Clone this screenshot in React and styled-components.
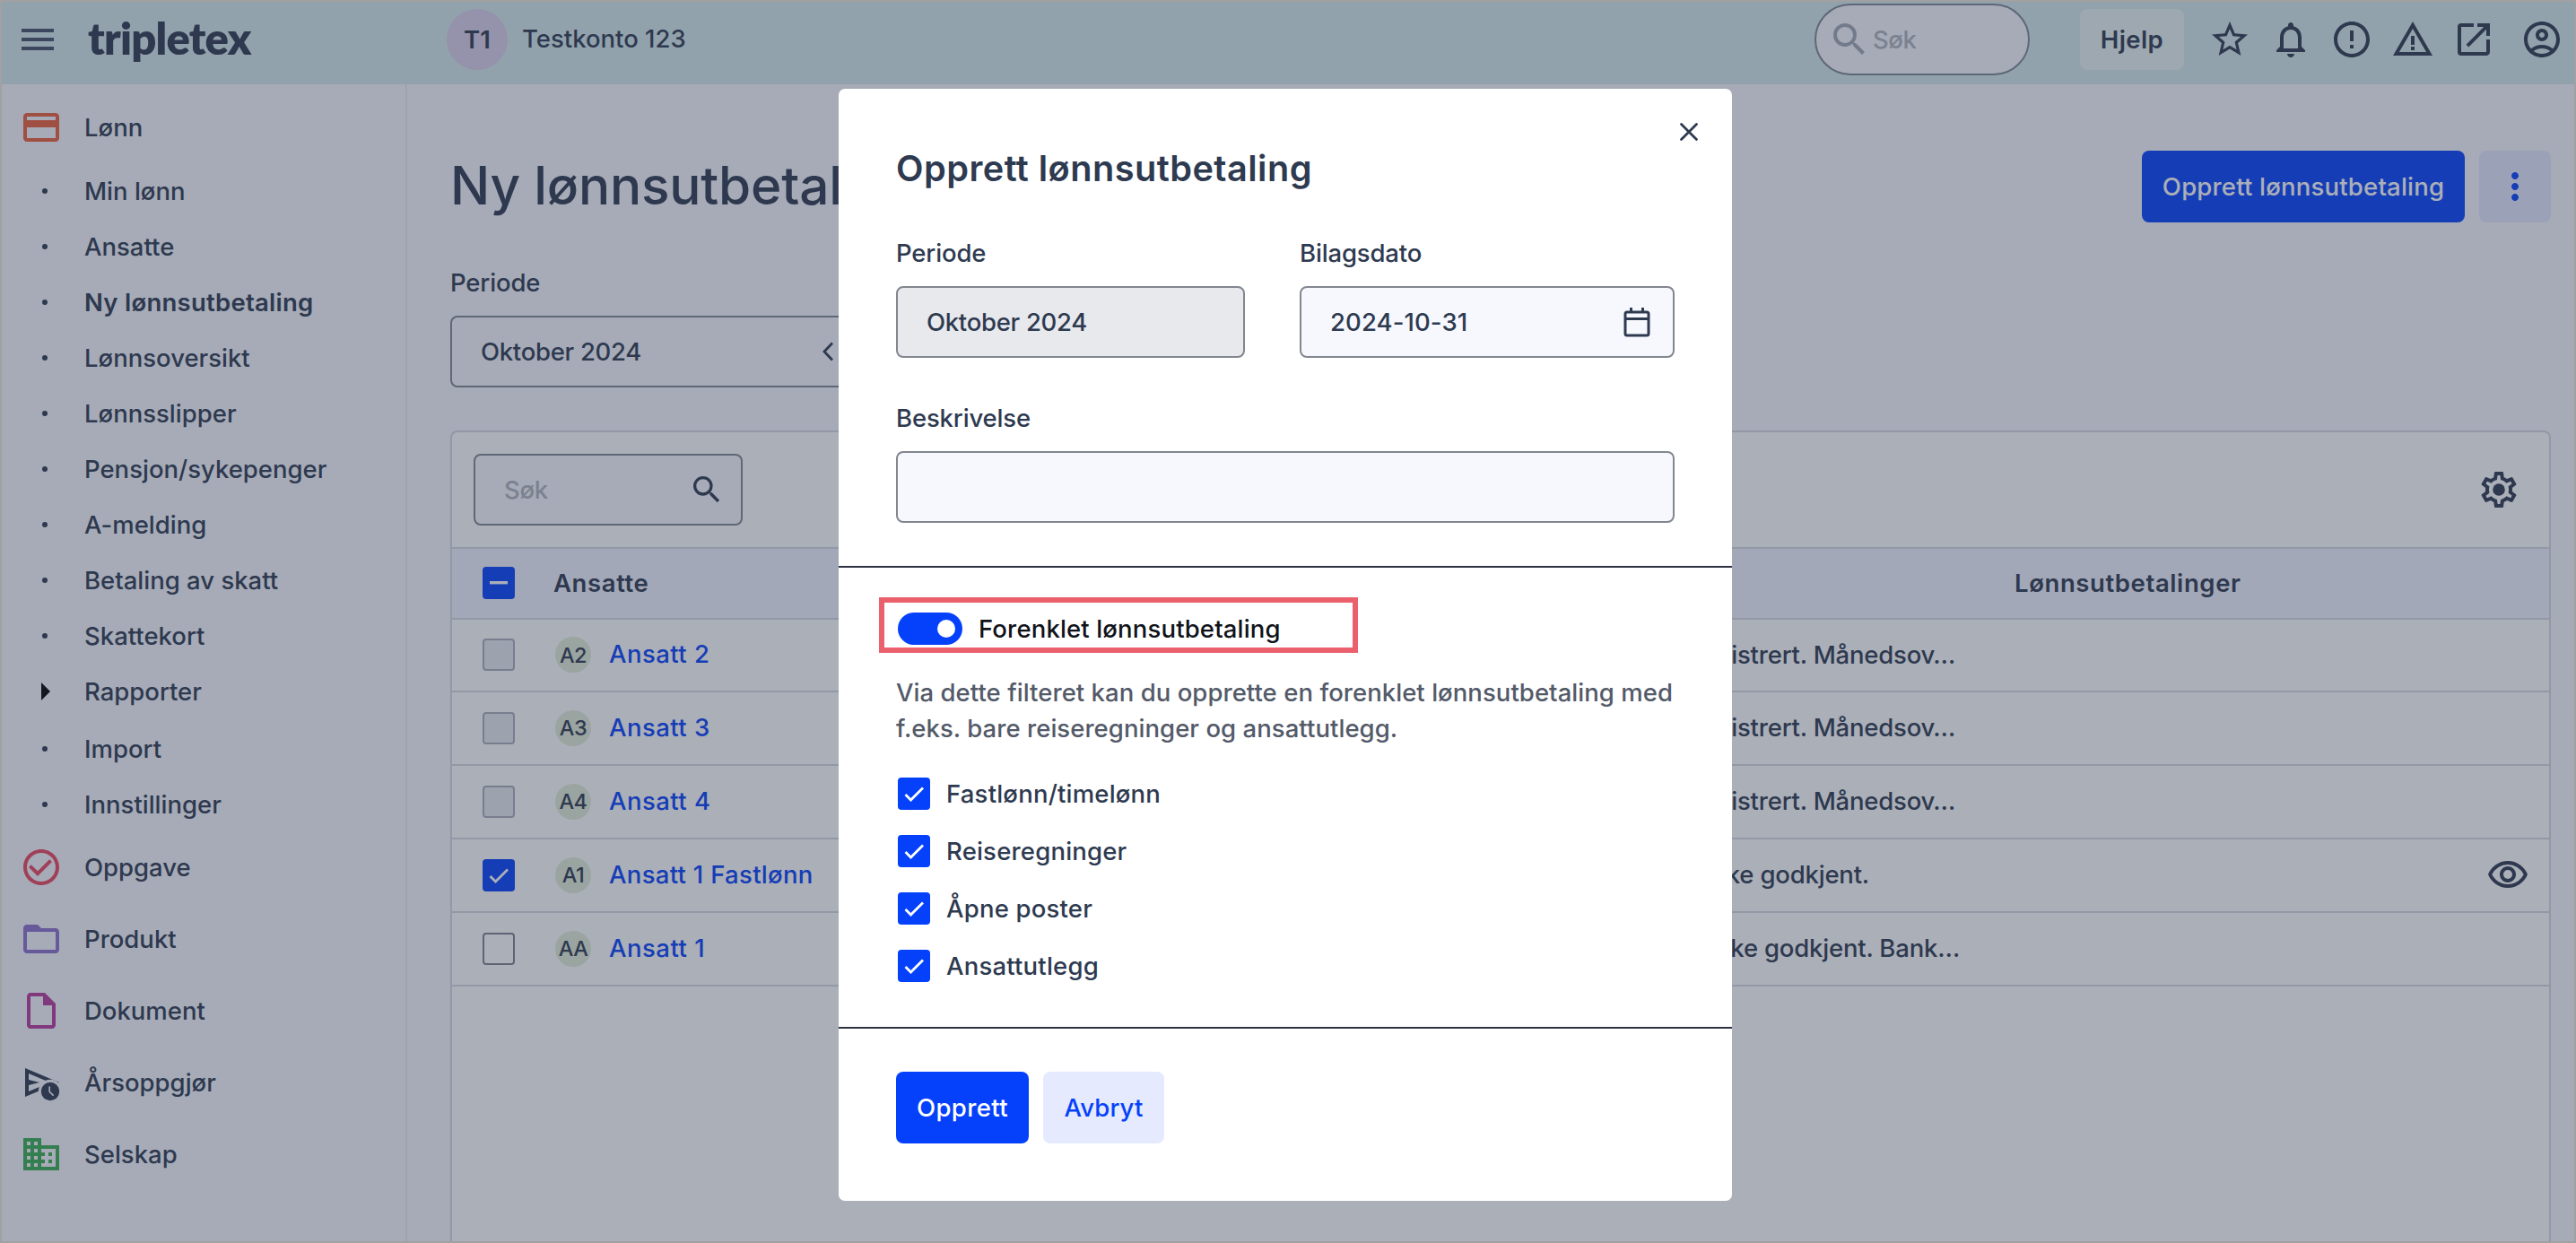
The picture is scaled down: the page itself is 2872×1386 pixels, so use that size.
import React from "react";
import styled, { createGlobalStyle } from "styled-components";
import {
  MdMenu, MdStarBorder, MdNotificationsNone, MdErrorOutline, MdWarningAmber, MdLaunch,
  MdOutlineAccountCircle, MdSearch, MdCreditCard, MdCheckCircleOutline, MdFolderOpen,
  MdOutlineInsertDriveFile, MdBusiness, MdMoreVert, MdOutlineVisibility,
} from "react-icons/md";

const ink = "#2e3a50";
const blue = "#0541fb";
const line = "#d5d8e0";

const Global = createGlobalStyle`
  * { box-sizing: border-box; }
  body { margin: 0; overflow: hidden; }
  body, input, button {
    font-family: Inter, "Liberation Sans", sans-serif;
    font-size: 27.5px;
    font-weight: 450;
    letter-spacing: 0;
    color: ${ink};
  }
`;

const Page = styled.div`
  position: relative;
  height: 1386px;
  overflow: hidden;
  background: #f7f8fd;
  display: flex;
  flex-direction: column;
`;

/* Header */
const Header = styled.header`
  height: 94px;
  flex: none;
  background: #d5e9eb;
  display: flex;
  align-items: flex-start;
  padding: 0 4px 0 18px;
`;
const HeaderGroup = styled.div`
  display: flex;
  align-items: center;
  height: 88px;
  width: ${(p) => (p.$width ? `${p.$width}px` : "auto")};
  margin-left: ${(p) => (p.$push ? "auto" : 0)};
`;
const MenuIcon = styled(MdMenu)`
  width: 48px;
  height: 48px;
  color: #46506a;
`;
const Logo = styled.span`
  font-family: Lato, sans-serif;
  font-weight: 800;
  font-size: 49px;
  letter-spacing: -0.8px;
  line-height: 60px;
  margin: -5px 0 0 32px;
`;
const CompanyAvatar = styled.span`
  width: 68px;
  height: 68px;
  border-radius: 50%;
  background: #dacfe9;
  display: grid;
  place-items: center;
  font-weight: 600;
  padding-bottom: 1px;
`;
const CompanyName = styled.span`
  margin: 0 0 2px 16px;
`;
const GlobalSearch = styled.label`
  width: 240px;
  height: 80px;
  border: 2px solid #7e8794;
  border-radius: 40px;
  background: #f7f8fd;
  display: flex;
  align-items: center;
  padding-left: 13px;
  color: #b0b3bd;
  gap: 2px;
  letter-spacing: -0.4px;
  svg { width: 48px; height: 48px; color: #a2a8b4; }
`;
const HelpButton = styled.button`
  width: 116px;
  height: 68px;
  margin: 0 17px 0 56px;
  border: 0;
  border-radius: 8px;
  background: rgba(255, 255, 255, 0.45);
  font-weight: 600;
  letter-spacing: 0.4px;
  padding: 0 0 1px;
`;
const IconSlot = styled.span`
  width: 68px;
  height: 68px;
  margin-left: ${(p) => p.$before || 0}px;
  display: grid;
  place-items: center;
  svg { width: 48px; height: 48px; }
`;

/* Sidebar */
const Body = styled.div`
  flex: 1;
  display: flex;
  min-height: 0;
`;
const Sidebar = styled.nav`
  width: 454px;
  flex: none;
  border-right: 2px solid #e9ebf1;
  padding-top: 7px;
`;
const NavMain = styled.div`
  height: ${(p) => (p.$open ? 81 : 80)}px;
  display: flex;
  align-items: center;
  gap: 24px;
  padding: 0 0 ${(p) => (p.$open ? 0 : 3)}px 22px;
  svg { width: 48px; height: 48px; color: ${(p) => p.$color}; }
`;
const NavSub = styled.div`
  height: ${(p) => (p.$expandable ? 64 : 62)}px;
  padding: 0 0 ${(p) => (p.$expandable ? 2 : 0)}px 22px;
  display: flex;
  align-items: center;
  gap: 24px;
  font-weight: ${(p) => (p.$active ? 600 : 450)};
  letter-spacing: ${(p) => (p.$active ? 0.25 : 0)}px;
`;
const Marker = styled.span`
  width: 48px;
  display: flex;
  justify-content: center;
  padding-left: ${(p) => (p.$arrow ? 10 : 8)}px;
  &::before {
    content: "";
    width: ${(p) => (p.$arrow ? 0 : 6)}px;
    height: ${(p) => (p.$arrow ? 0 : 6)}px;
    ${(p) => p.$arrow
      ? "border-left: 10px solid #000; border-top: 10px solid transparent; border-bottom: 10px solid transparent;"
      : `border-radius: 50%; background: ${ink};`}
  }
`;

/* Main */
const Main = styled.main`
  flex: 1;
  display: flex;
  flex-direction: column;
  padding: 74px 28px 0 48px;
  min-width: 0;
`;
const TitleBar = styled.div`
  display: flex;
  align-items: center;
  height: 80px;
  gap: 16px;
`;
const PageTitle = styled.h1`
  margin: 0 auto 2px 0;
  font-weight: 480;
  font-size: 58.5px;
  letter-spacing: -0.2px;
  line-height: 80px;
`;
const Button = styled.button`
  height: 80px;
  width: ${(p) => p.$width}px;
  border: 0;
  padding: 0 0 1px;
  border-radius: 8px;
  background: ${(p) => (p.$soft ? "#e5eaff" : blue)};
  color: ${(p) => (p.$soft ? blue : "#fff")};
  font-weight: ${(p) => p.$weight || 450};
  letter-spacing: ${(p) => p.$spacing || 0.2}px;
  display: grid;
  place-items: center;
  svg { width: 48px; height: 48px; }
`;
const Field = styled.div`
  display: flex;
  flex-direction: column;
  width: ${(p) => (p.$width ? `${p.$width}px` : "auto")};
`;
const Label = styled.label`
  height: 32px;
  line-height: 32px;
  margin-bottom: 21px;
  letter-spacing: -0.15px;
`;
const InputBox = styled.div`
  height: 80px;
  width: ${(p) => (p.$width ? `${p.$width}px` : "auto")};
  border: 2px solid #82868f;
  border-radius: 8px;
  background: ${(p) => (p.$disabled ? "#e8e9ed" : "#f6f8fe")};
  color: ${(p) => (p.$placeholder ? "#b0b3bd" : ink)};
  letter-spacing: ${(p) => p.$spacing || -0.3}px;
  display: flex;
  align-items: center;
  justify-content: space-between;
  padding: 0 ${(p) => p.$right || 24}px 1px 32px;
`;
const PeriodField = styled(Field)`
  margin: 51px 0 48px;
`;
const PeriodSelect = styled(InputBox)`
  justify-content: flex-start;
  gap: 202px;
`;

/* Table */
const Panel = styled.section`
  flex: 1;
  border: 2px solid ${line};
  border-bottom: 0;
  border-radius: 8px 8px 0 0;
  background: #fff;
`;
const Toolbar = styled.div`
  height: 130px;
  border-bottom: 2px solid ${line};
  display: flex;
  align-items: center;
  justify-content: space-between;
  padding: 0 32px 0 24px;
`;
const SearchIcon = styled(MdSearch)`
  width: 40px;
  height: 40px;
  color: ${ink};
`;
const Row = styled.div`
  height: ${(p) => p.$height || 82}px;
  border-bottom: 2px solid ${line};
  background: ${(p) => (p.$head ? "#f1f3ff" : "transparent")};
  font-weight: ${(p) => (p.$head ? 600 : 450)};
  letter-spacing: ${(p) => (p.$head ? 0.6 : -0.2)}px;
  display: grid;
  grid-template-columns: 79px 1155px 508px 1fr;
  align-items: center;
  padding: 0 0 1px 34px;
`;
const Person = styled.div`
  display: flex;
  align-items: center;
  padding-left: 2px;
`;
const HeadCell = styled.div`
  padding: 0 0 1px ${(p) => p.$left}px;
`;
const Avatar = styled.span`
  width: 40px;
  height: 40px;
  border-radius: 50%;
  background: #e3edd8;
  font-size: 23.5px;
  letter-spacing: -0.5px;
  display: grid;
  place-items: center;
  margin-right: 20px;
`;
const PersonLink = styled.a`
  color: ${blue};
  padding-bottom: 2px;
  letter-spacing: ${(p) => p.$spacing}px;
`;
const Status = styled.div`
  width: ${(p) => p.$width}px;
  padding-bottom: 1px;
  text-align: right;
  white-space: nowrap;
`;
const RowAction = styled.div`
  display: flex;
  justify-content: flex-end;
  padding-right: 22px;
  svg { width: 48px; height: 48px; }
`;
const CheckSquare = styled.span`
  width: 36px;
  height: 36px;
  flex: none;
  border-radius: 4px;
  display: grid;
  place-items: center;
  border: ${(p) => (p.$on ? "0" : `2px solid ${p.$disabled ? "#a9adb8" : "#7e8290"}`)};
  background: ${(p) => (p.$on ? blue : p.$disabled ? "#e8e9f0" : "transparent")};
`;

/* Dialog */
const Overlay = styled.div`
  position: absolute;
  inset: 0;
  background: rgba(46, 58, 80, 0.405);
  padding: 99px 0 0 935px;
`;
const Dialog = styled.div`
  width: 996px;
  height: 1240px;
  border-radius: 7px;
  background: #fff;
  display: flex;
  flex-direction: column;
`;
const DialogTop = styled.div`
  height: 534px;
  flex: none;
  border-bottom: 2px solid #2c3240;
  padding: 28px 64px 0;
`;
const CloseRow = styled.div`
  height: 40px;
  display: flex;
  justify-content: flex-end;
  margin-right: -36px;
`;
const DialogTitle = styled.h2`
  margin: -1px 0 0;
  height: 44px;
  line-height: 44px;
  font-size: 39.7px;
  font-weight: 620;
  letter-spacing: 0.45px;
`;
const FieldRow = styled.div`
  display: flex;
  gap: 61px;
  margin: 56px 0 51px;
`;
const DialogMiddle = styled.div`
  height: 514px;
  flex: none;
  border-bottom: 2px solid #2c3240;
  padding: 50px 64px 0;
`;
const ToggleRow = styled.div`
  position: relative;
  height: 36px;
  display: flex;
  align-items: center;
  gap: 18px;
  padding-left: 2px;
  letter-spacing: 0.15px;
  color: #10131a;
`;
const Highlight = styled.div`
  position: absolute;
  left: -19px;
  top: -17px;
  width: 534px;
  height: 62px;
  border: 6px solid #ea606d;
`;
const Toggle = styled.span`
  width: 72px;
  height: 36px;
  border-radius: 18px;
  background: ${blue};
  display: flex;
  align-items: center;
  justify-content: flex-end;
  padding-right: 8px;
  &::after {
    content: "";
    width: 20px;
    height: 20px;
    border-radius: 50%;
    background: #fff;
  }
`;
const Description = styled.p`
  margin: 33px -20px 0 0;
  line-height: 40px;
  letter-spacing: 0.05px;
  color: #535a69;
`;
const Options = styled.div`
  margin-top: 35px;
  display: flex;
  flex-direction: column;
  gap: 28px;
`;
const Option = styled.label`
  display: flex;
  align-items: center;
  height: 36px;
  gap: 18px;
  padding-left: 2px;
  letter-spacing: 0.2px;
`;
const Text = styled.span`
  padding-bottom: 1px;
`;
const Actions = styled.div`
  display: flex;
  gap: 16px;
  padding: 48px 64px 0;
`;
const Edge = styled.div`
  position: absolute;
  inset: 0;
  border: 2px solid #a1a1a1;
  pointer-events: none;
`;

const Check = () => (
  <svg width="24" height="24" viewBox="0 0 24 24" fill="none" stroke="#fff" strokeWidth="2.8">
    <path d="M2.5 13 L8.5 19 L22 5.5" />
  </svg>
);
const Dash = () => (
  <svg width="20" height="4" viewBox="0 0 20 4"><rect width="20" height="3.4" fill="#fff" /></svg>
);
const Calendar = () => (
  <svg width="30" height="34" viewBox="0 0 30 34" fill="none" stroke={ink} strokeWidth="3">
    <rect x="2" y="6" width="26" height="26" rx="2" />
    <path d="M2 13.5H28M8.5 1V6M21.5 1V6" />
  </svg>
);
const Close = () => (
  <svg width="40" height="40" viewBox="0 0 40 40" stroke={ink} strokeWidth="2.8" strokeLinecap="round">
    <path d="M11.5 11.5L28.5 28.5M28.5 11.5L11.5 28.5" />
  </svg>
);
const ChevronLeft = () => (
  <svg width="12" height="22" viewBox="0 0 12 22" fill="none" stroke={ink} strokeWidth="2.8">
    <path d="M11 1.5L2 11L11 20.5" />
  </svg>
);
const ScheduleSend = () => (
  <svg viewBox="0 0 24 24">
    <mask id="cut">
      <rect width="24" height="24" fill="#fff" />
      <circle cx="17" cy="17" r="6.6" fill="#000" />
    </mask>
    <path mask="url(#cut)" fill={ink} d="M3 20V4l19 8-19 8zm2-3l11.85-5L5 7v3.5l6 1.5-6 1.5V17z" />
    <circle cx="17" cy="17" r="5.1" fill={ink} />
    <path d="M16.6 14.2V17.1L18.8 19.3" fill="none" stroke="#f7f8fd" strokeWidth="0.8" />
  </svg>
);
const Gear = () => (
  <svg width="48" height="48" viewBox="0 0 24 24" fill={ink}>
    <path d="M19.43 12.98c.04-.32.07-.64.07-.98 0-.34-.03-.66-.07-.98l2.11-1.65c.19-.15.24-.42.12-.64l-2-3.46c-.09-.16-.26-.25-.44-.25-.06 0-.12.01-.17.03l-2.49 1c-.52-.4-1.08-.73-1.69-.98l-.38-2.65C14.46 2.18 14.25 2 14 2h-4c-.25 0-.46.18-.49.42l-.38 2.65c-.61.25-1.17.59-1.69.98l-2.49-1c-.06-.02-.12-.03-.18-.03-.17 0-.34.09-.43.25l-2 3.46c-.13.22-.07.49.12.64l2.11 1.65c-.04.32-.07.65-.07.98 0 .33.03.66.07.98l-2.11 1.65c-.19.15-.24.42-.12.64l2 3.46c.09.16.26.25.44.25.06 0 .12-.01.17-.03l2.49-1c.52.4 1.08.73 1.69.98l.38 2.65c.03.24.24.42.49.42h4c.25 0 .46-.18.49-.42l.38-2.65c.61-.25 1.17-.59 1.69-.98l2.49 1c.06.02.12.03.18.03.17 0 .34-.09.43-.25l2-3.46c.12-.22.07-.49-.12-.64l-2.11-1.65zm-1.98-1.71c.04.31.05.52.05.73 0 .21-.02.43-.05.73l-.14 1.13.89.7 1.08.84-.7 1.21-1.27-.51-1.04-.42-.9.68c-.43.32-.84.56-1.25.73l-1.06.43-.16 1.13-.2 1.35h-1.4l-.19-1.35-.16-1.13-1.06-.43c-.43-.18-.83-.41-1.23-.71l-.91-.7-1.06.43-1.27.51-.7-1.21 1.08-.84.89-.7-.14-1.13c-.03-.31-.05-.54-.05-.74s.02-.43.05-.73l.14-1.13-.89-.7-1.08-.84.7-1.21 1.27.51 1.04.42.9-.68c.43-.32.84-.56 1.25-.73l1.06-.43.16-1.13.2-1.35h1.39l.19 1.35.16 1.13 1.06.43c.43.18.83.41 1.23.71l.91.7 1.06-.43 1.27-.51.7 1.21-1.07.85-.89.7.14 1.13z" />
    <circle cx="12" cy="12" r="3.4" />
  </svg>
);

const subItems = [
  "Min lønn", "Ansatte", "Ny lønnsutbetaling", "Lønnsoversikt", "Lønnsslipper",
  "Pensjon/sykepenger", "A-melding", "Betaling av skatt", "Skattekort", "Rapporter",
  "Import", "Innstillinger",
];
const mainItems = [
  ["Oppgave", MdCheckCircleOutline, "#eb465f"],
  ["Produkt", MdFolderOpen, "#8c71cd"],
  ["Dokument", MdOutlineInsertDriveFile, "#b9399e"],
  ["Årsoppgjør", ScheduleSend, ink],
  ["Selskap", MdBusiness, "#3aad50"],
];
const people = [
  { code: "A2", name: "Ansatt 2", spacing: 0.45, status: "registrert. Månedsov…", end: 408, disabled: true },
  { code: "A3", name: "Ansatt 3", spacing: 0.45, status: "registrert. Månedsov…", end: 408, disabled: true },
  { code: "A4", name: "Ansatt 4", spacing: 0.45, status: "registrert. Månedsov…", end: 408, disabled: true },
  { code: "A1", name: "Ansatt 1 Fastlønn", spacing: 0.3, status: "Ikke godkjent.", end: 312, on: true },
  { code: "AA", name: "Ansatt 1", spacing: 0.5, status: "Ikke godkjent. Bank…", end: 413 },
];
const options = ["Fastlønn/timelønn", "Reiseregninger", "Åpne poster", "Ansattutlegg"];
const headerIcons = [
  [MdStarBorder], [MdNotificationsNone], [MdErrorOutline], [MdWarningAmber], [MdLaunch],
  [MdOutlineAccountCircle, 8],
];

export default function App() {
  return (
    <Page>
      <Global />
      <Header>
        <HeaderGroup $width={480}>
          <MenuIcon />
          <Logo>tripletex</Logo>
        </HeaderGroup>
        <HeaderGroup>
          <CompanyAvatar>T1</CompanyAvatar>
          <CompanyName>Testkonto 123</CompanyName>
        </HeaderGroup>
        <HeaderGroup $push>
          <GlobalSearch><MdSearch />Søk</GlobalSearch>
          <HelpButton>Hjelp</HelpButton>
          {headerIcons.map(([Icon, before], i) => (
            <IconSlot key={i} $before={before}><Icon /></IconSlot>
          ))}
        </HeaderGroup>
      </Header>
      <Body>
        <Sidebar>
          <NavMain $open $color="#ed5f3c"><MdCreditCard />Lønn</NavMain>
          {subItems.map((t) => (
            <NavSub key={t} $active={t === "Ny lønnsutbetaling"} $expandable={t === "Rapporter"}>
              <Marker $arrow={t === "Rapporter"} />{t}
            </NavSub>
          ))}
          {mainItems.map(([t, Icon, color]) => (
            <NavMain key={t} $color={color}><Icon />{t}</NavMain>
          ))}
        </Sidebar>
        <Main>
          <TitleBar>
            <PageTitle>Ny lønnsutbetaling</PageTitle>
            <Button $width={360}>Opprett lønnsutbetaling</Button>
            <Button $width={80} $soft><MdMoreVert /></Button>
          </TitleBar>
          <PeriodField>
            <Label>Periode</Label>
            <PeriodSelect $width={500}>Oktober 2024<ChevronLeft /></PeriodSelect>
          </PeriodField>
          <Panel>
            <Toolbar>
              <InputBox $width={300} $placeholder $right={18}>Søk<SearchIcon /></InputBox>
              <Gear />
            </Toolbar>
            <Row $head $height={79}>
              <CheckSquare $on><Dash /></CheckSquare>
              <HeadCell $left={-1}>Ansatte</HeadCell>
              <HeadCell $left={474}>Lønnsutbetalinger</HeadCell>
            </Row>
            {people.map((p, i) => (
              <Row key={p.code} $height={i === 0 ? 81 : 82}>
                <CheckSquare $on={p.on} $disabled={p.disabled}>{p.on && <Check />}</CheckSquare>
                <Person>
                  <Avatar>{p.code}</Avatar>
                  <PersonLink $spacing={p.spacing}>{p.name}</PersonLink>
                </Person>
                <Status $width={p.end}>{p.status}</Status>
                <RowAction>{p.on && <MdOutlineVisibility />}</RowAction>
              </Row>
            ))}
          </Panel>
        </Main>
      </Body>
      <Overlay>
        <Dialog>
          <DialogTop>
            <CloseRow><Close /></CloseRow>
            <DialogTitle>Opprett lønnsutbetaling</DialogTitle>
            <FieldRow>
              <Field $width={389}>
                <Label>Periode</Label>
                <InputBox $disabled>Oktober 2024</InputBox>
              </Field>
              <Field $width={418}>
                <Label>Bilagsdato</Label>
                <InputBox $spacing={0.1} $right={25}>2024-10-31<Calendar /></InputBox>
              </Field>
            </FieldRow>
            <Field>
              <Label>Beskrivelse</Label>
              <InputBox />
            </Field>
          </DialogTop>
          <DialogMiddle>
            <ToggleRow>
              <Toggle /><Text>Forenklet lønnsutbetaling</Text>
              <Highlight />
            </ToggleRow>
            <Description>
              Via dette filteret kan du opprette en forenklet lønnsutbetaling med<br />
              f.eks. bare reiseregninger og ansattutlegg.
            </Description>
            <Options>
              {options.map((o) => (
                <Option key={o}><CheckSquare $on><Check /></CheckSquare><Text>{o}</Text></Option>
              ))}
            </Options>
          </DialogMiddle>
          <Actions>
            <Button $width={148} $weight={500} $spacing={0.4}>Opprett</Button>
            <Button $width={135} $weight={500} $spacing={0.1} $soft>Avbryt</Button>
          </Actions>
        </Dialog>
      </Overlay>
      <Edge />
    </Page>
  );
}
